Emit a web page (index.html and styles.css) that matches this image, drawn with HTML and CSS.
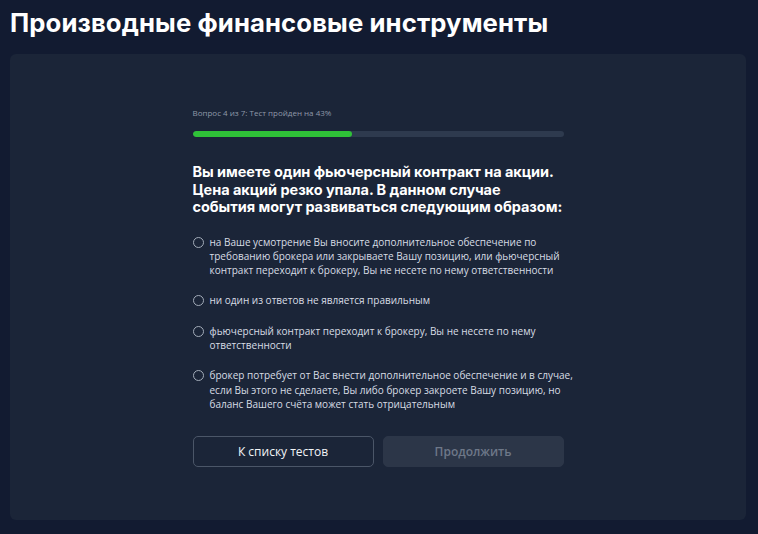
FILE: index.html
```html
<!DOCTYPE html>
<html lang="ru">
<head>
<meta charset="utf-8">
<title>Производные финансовые инструменты</title>
<link rel="stylesheet" href="styles.css">
</head>
<body>
<h1 class="page-title">Производные финансовые инструменты</h1>
<main class="card">
  <section class="quiz">
    <div class="progress-label">Вопрос 4 из 7: Тест пройден на 43%</div>
    <div class="progress"><div class="progress-fill" style="width:43%"></div></div>
    <h2 class="question">Вы имеете один фьючерсный контракт на акции.<br>Цена акций резко упала. В данном случае<br>события могут развиваться следующим образом:</h2>
    <ul class="options">
      <li class="option"><span class="radio"></span><span class="option-text">на Ваше усмотрение Вы вносите дополнительное обеспечение по требованию брокера или закрываете Вашу позицию, или фьючерсный контракт переходит к брокеру, Вы не несете по нему ответственности</span></li>
      <li class="option"><span class="radio"></span><span class="option-text">ни один из ответов не является правильным</span></li>
      <li class="option"><span class="radio"></span><span class="option-text">фьючерсный контракт переходит к брокеру, Вы не несете по нему ответственности</span></li>
      <li class="option"><span class="radio"></span><span class="option-text">брокер потребует от Вас внести дополнительное обеспечение и в случае, если Вы этого не сделаете, Вы либо брокер закроете Вашу позицию, но баланс Вашего счёта может стать отрицательным</span></li>
    </ul>
    <div class="actions">
      <button class="btn btn-outline">К списку тестов</button>
      <button class="btn btn-disabled" disabled>Продолжить</button>
    </div>
  </section>
</main>
</body>
</html>
```
FILE: styles.css
```css
html, body {
  margin: 0;
  padding: 0;
  background: #121b31;
  height: 100%;
}

body {
  font-family: "Open Sans", "Noto Sans", sans-serif;
  color: #e8ebf0;
  overflow: hidden;
}

.page-title {
  margin: 0;
  padding: 6px 0 0 10px;
  height: 48px;
  box-sizing: border-box;
  font-family: Inter, "Noto Sans", sans-serif;
  font-weight: 700;
  font-size: 25.7px;
  line-height: 34px;
  color: #ffffff;
  letter-spacing: 0.1px;
}

.card {
  margin: 6px 12px 0 10px;
  height: 466px;
  background: #1b2538;
  border-radius: 6px;
  display: flex;
  justify-content: center;
}

.quiz {
  width: 371px;
  padding-top: 54px;
}

.progress-label {
  font-size: 8px;
  line-height: 10px;
  color: #8f99a8;
}

.progress {
  margin-top: 13px;
  height: 6px;
  border-radius: 3px;
  background: #2e3a4e;
  overflow: hidden;
}

.progress-fill {
  height: 100%;
  border-radius: 3px;
  background: #2fc238;
}

.question {
  margin: 26px -20px 0 0;
  font-family: Inter, "Noto Sans", sans-serif;
  font-weight: 700;
  font-size: 14.5px;
  line-height: 17.5px;
  letter-spacing: -0.05px;
  white-space: nowrap;
  color: #ffffff;
}

.options {
  list-style: none;
  margin: 19px -12px 0 0;
  padding: 0;
  display: flex;
  flex-direction: column;
  gap: 16px;
}

.option {
  display: flex;
  align-items: flex-start;
  gap: 6px;
}

.radio {
  flex: none;
  width: 9px;
  height: 9px;
  margin-top: 2px;
  border: 1px solid #a3acb9;
  border-radius: 50%;
}

.option-text {
  font-size: 10px;
  line-height: 14.3px;
  color: #d8dde5;
}

.actions {
  margin-top: 25px;
  display: flex;
  gap: 9px;
}

.btn {
  flex: 1;
  height: 31px;
  border-radius: 5px;
  font-family: "Open Sans", "Noto Sans", sans-serif;
  font-size: 12px;
}

.btn-outline {
  background: transparent;
  border: 1px solid #4b5668;
  color: #f2f4f7;
}

.btn-disabled {
  background: #2c3648;
  border: 1px solid #2c3648;
  color: #6e7888;
  font-weight: 600;
}
```
